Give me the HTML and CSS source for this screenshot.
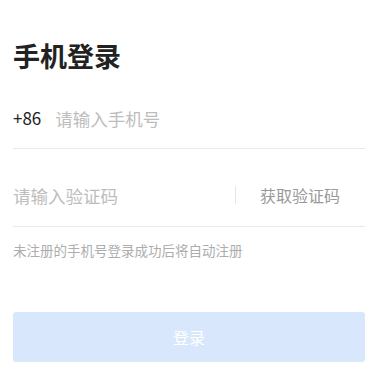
FILE: index.html
```html
<!DOCTYPE html>
<html lang="zh-CN">
<head>
  <meta charset="UTF-8">
  <title>手机登录</title>
  <link rel="stylesheet" href="styles.css">
</head>
<body>
  <div class="container">
    <h1>手机登录</h1>

    <div class="field phone-field">
      <span class="prefix">+86</span>
      <input type="tel" placeholder="请输入手机号">
    </div>

    <div class="field code-field">
      <input type="text" placeholder="请输入验证码">
      <span class="get-code">获取验证码</span>
    </div>

    <p class="tip">未注册的手机号登录成功后将自动注册</p>

    <button class="login-btn" disabled>登录</button>
  </div>
</body>
</html>
```

FILE: styles.css
```css
body {
  font-family: "Noto Sans CJK SC", "Noto Sans", sans-serif;
  margin: 0;
  padding: 0;
  background-color: #fff;
  color: #222;
}

.container {
  padding: 36px 25px 0 13px;
}

h1 {
  font-size: 27px;
  font-weight: bold;
  line-height: 40px;
  margin: 0;
  color: #222;
}

.field {
  display: flex;
  align-items: center;
  border-bottom: 1px solid #e9e9e9;
}

.phone-field {
  padding: 30px 0 18px;
}

.code-field {
  padding: 34px 0 19px;
}

.field input {
  flex: 1;
  min-width: 0;
  border: none;
  outline: none;
  padding: 0;
  height: 24px;
  font-family: inherit;
  font-size: 17.5px;
  color: #222;
  background: transparent;
}

.field input::placeholder {
  color: #bdbdbd;
}

.prefix {
  font-size: 17px;
  line-height: 24px;
  margin-right: 14px;
  color: #222;
}

.get-code {
  font-size: 16px;
  line-height: 18px;
  color: #999;
  border-left: 1px solid #e6e6e6;
  padding-left: 24px;
  margin-right: 25px;
}

.tip {
  margin: 13px 0 0;
  font-size: 13.5px;
  line-height: 20px;
  color: #adadad;
}

.login-btn {
  display: block;
  width: 100%;
  height: 50px;
  margin-top: 52px;
  border: none;
  border-radius: 3px;
  background-color: #d8e7fc;
  color: #fff;
  font-family: inherit;
  font-size: 16px;
}
```
